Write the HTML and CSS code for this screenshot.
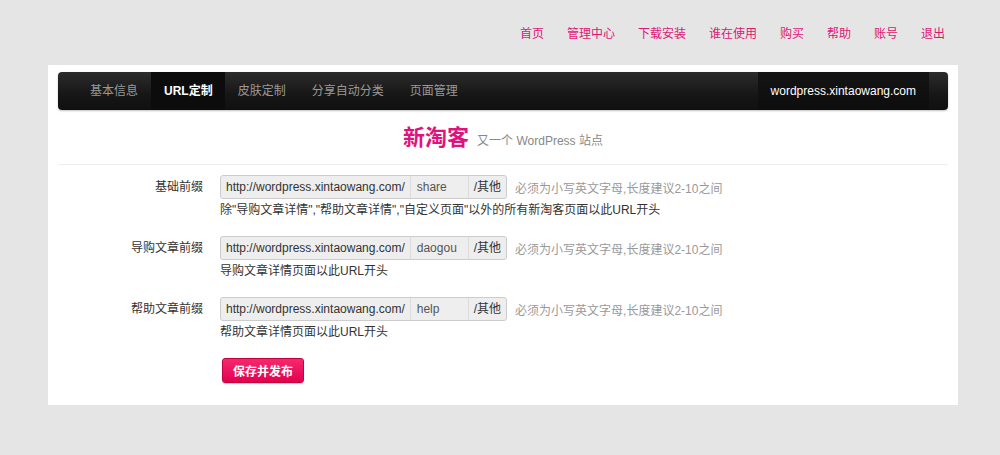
FILE: index.html
```html
<!DOCTYPE html>
<html lang="zh-CN">
<head>
<meta charset="utf-8">
<title>URL定制 - 新淘客</title>
<link rel="stylesheet" href="styles.css">
</head>
<body>
<div class="topbar">
  <a href="#">首页</a>
  <a href="#">管理中心</a>
  <a href="#">下载安装</a>
  <a href="#">谁在使用</a>
  <a href="#">购买</a>
  <a href="#">帮助</a>
  <a href="#">账号</a>
  <a href="#">退出</a>
</div>
<div class="panel">
  <div class="navbar">
    <ul class="tabs">
      <li><a href="#">基本信息</a></li>
      <li class="active"><a href="#">URL定制</a></li>
      <li><a href="#">皮肤定制</a></li>
      <li><a href="#">分享自动分类</a></li>
      <li><a href="#">页面管理</a></li>
    </ul>
    <div class="site">wordpress.xintaowang.com</div>
  </div>
  <div class="header">
    <span class="brand">新淘客</span><span class="tagline">又一个 WordPress 站点</span>
  </div>
  <form class="form">
    <div class="row">
      <label class="label">基础前缀</label>
      <div class="controls">
        <div class="line">
          <div class="group">
            <span class="addon">http://wordpress.xintaowang.com/</span><span class="field">share</span><span class="addon">/其他</span>
          </div>
          <span class="hint">必须为小写英文字母,长度建议2-10之间</span>
        </div>
        <p class="help">除"导购文章详情","帮助文章详情","自定义页面"以外的所有新淘客页面以此URL开头</p>
      </div>
    </div>
    <div class="row">
      <label class="label">导购文章前缀</label>
      <div class="controls">
        <div class="line">
          <div class="group">
            <span class="addon">http://wordpress.xintaowang.com/</span><span class="field">daogou</span><span class="addon">/其他</span>
          </div>
          <span class="hint">必须为小写英文字母,长度建议2-10之间</span>
        </div>
        <p class="help">导购文章详情页面以此URL开头</p>
      </div>
    </div>
    <div class="row">
      <label class="label">帮助文章前缀</label>
      <div class="controls">
        <div class="line">
          <div class="group">
            <span class="addon">http://wordpress.xintaowang.com/</span><span class="field">help</span><span class="addon">/其他</span>
          </div>
          <span class="hint">必须为小写英文字母,长度建议2-10之间</span>
        </div>
        <p class="help">帮助文章详情页面以此URL开头</p>
      </div>
    </div>
    <div class="actions">
      <button type="button" class="btn">保存并发布</button>
    </div>
  </form>
</div>
</body>
</html>
```
FILE: styles.css
```css
* { box-sizing: border-box; }
html, body {
  margin: 0;
  padding: 0;
  background: #e5e5e5;
  font-family: "Liberation Sans", "Noto Sans CJK SC", sans-serif;
  font-size: 12px;
  color: #333;
}
a { text-decoration: none; }

.topbar {
  display: flex;
  justify-content: flex-end;
  gap: 23px;
  padding: 26px 55px 0 0;
  height: 65px;
  line-height: 16px;
}
.topbar a { color: #de1777; }

.panel {
  width: 910px;
  margin-left: 48px;
  background: #fff;
  padding: 7px 10px 22px;
  box-shadow: 0 1px 1px rgba(0,0,0,0.04);
}

.navbar {
  display: flex;
  justify-content: space-between;
  height: 38px;
  border-radius: 4px;
  background: linear-gradient(#2c2c2c, #161616 60%, #101010);
  padding: 0 19px;
  box-shadow: 0 1px 2px rgba(0,0,0,0.25);
}
.tabs {
  display: flex;
  list-style: none;
  margin: 0;
  padding: 0;
}
.tabs li a {
  display: block;
  padding: 0 13px;
  line-height: 38px;
  color: #999;
}
.tabs li.active a {
  background: #0c0c0c;
  color: #fff;
  font-weight: bold;
  padding: 0 12px 0 13px;
}
.site {
  background: linear-gradient(#141414, #0d0d0d);
  color: #fff;
  line-height: 38px;
  padding: 0 13px;
}

.header {
  text-align: center;
  padding: 14px 0 9px;
  border-bottom: 1px solid #eee;
  line-height: 28px;
}
.brand {
  color: #e0137c;
  font-size: 22px;
  font-weight: bold;
  margin-right: 8px;
}
.tagline { color: #888; font-size: 12px; }

.form { padding-top: 10px; }
.row {
  display: flex;
  margin-bottom: 15px;
}
.label {
  width: 145px;
  text-align: right;
  line-height: 24px;
  color: #333;
  flex-shrink: 0;
}
.controls { margin-left: 17px; }
.line {
  display: flex;
  align-items: center;
  gap: 8px;
}
.group {
  display: flex;
  height: 24px;
  border: 1px solid #ccc;
  border-radius: 3px;
  background: #eee;
  line-height: 22px;
  color: #333;
}
.addon { padding: 0 5px; }
.field {
  width: 59px;
  padding: 0 6px;
  border-left: 1px solid #dcdcdc;
  border-right: 1px solid #dcdcdc;
  color: #555;
}
.hint { color: #999; }
.help {
  margin: 0;
  line-height: 22px;
  color: #333;
}

.actions { padding-left: 164px; }
.btn {
  width: 82px;
  height: 25px;
  border: 1px solid #c4003f;
  border-radius: 3px;
  background: linear-gradient(#f5296e, #e20050);
  color: #fff;
  font-family: inherit;
  font-size: 12px;
  font-weight: bold;
  box-shadow: 0 1px 1px rgba(0,0,0,0.2);
  padding: 0;
}
```
